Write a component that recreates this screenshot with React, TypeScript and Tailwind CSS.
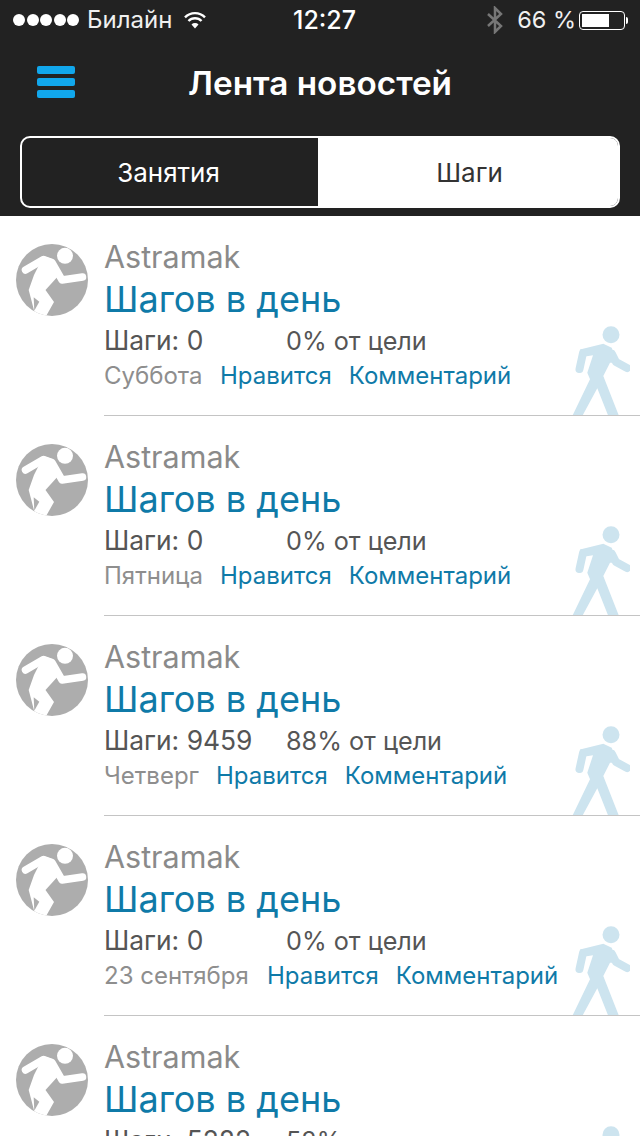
const font = { fontFamily: 'Inter, "Liberation Sans", sans-serif' };

function Avatar() {
  return (
    <svg width="72" height="72" viewBox="0 0 72 72" className="shrink-0">
      <defs>
        <clipPath id="avatar-clip">
          <circle cx="36" cy="36" r="36" />
        </clipPath>
      </defs>
      <circle cx="36" cy="36" r="36" fill="#adadad" />
      <g clipPath="url(#avatar-clip)">
        <circle cx="49" cy="11.8" r="8" fill="#fff" />
        <path d="M9.5 26 L27.5 15.5 L36 18.5 L46 36 L66.5 33" fill="none" stroke="#fff" strokeWidth="7.5" strokeLinecap="round" strokeLinejoin="round" />
        <path d="M18 31 L27.5 12 L36 15 L44 30 L29.5 46 L38 58 L29 74 L20 74 L12.7 46 Z" fill="#fff" />
        <path d="M17.7 53.3 L23.3 57.7 L18.3 66.7 Z" fill="#adadad" />
      </g>
    </svg>
  );
}

function Walker() {
  return (
    <svg width="60" height="90" viewBox="0 0 60 90" className="absolute left-[570px] bottom-0">
      <circle cx="41" cy="8.7" r="8.5" fill="#cde4ef" />
      <path d="M13 27 L9.5 43" fill="none" stroke="#cde4ef" strokeWidth="8" strokeLinecap="round" />
      <path d="M42 28 L46 36 L57 42" fill="none" stroke="#cde4ef" strokeWidth="8" strokeLinecap="round" strokeLinejoin="round" />
      <path d="M10 23.5 L33.3 17.7 L41.7 21.7 L47.3 36.7 L40 36.7 L33.3 50 L49 90 L38.3 90 L27.3 62.3 L12.3 90 L2.3 90 L20 53.3 L17.3 46.7 L23 29.3 L12 31 Z" fill="#cde4ef" />
    </svg>
  );
}

type Row = { day: string; steps: string; pct: string; dayW: string };

function FeedItem({ day, steps, pct, dayW }: Row) {
  return (
    <div className="relative h-[200px] shrink-0">
      <div className="flex pl-[16px] pt-[28px]">
        <Avatar />
        <div className="ml-[16px] flex flex-col">
          <div className="text-[30.5px] leading-[26px] text-[#8a8a8a]">Astramak</div>
          <div className="mt-[7px] text-[36px] leading-[44px] text-[#0f7aa8]">Шагов в день</div>
          <div className="flex items-baseline leading-[34px] text-[#555555] mt-[2px]">
            <span className="w-[182px] text-[26.4px]">{steps}</span>
            <span className="text-[25.2px]">{pct}</span>
          </div>
          <div className="flex text-[24px] leading-[34px] mt-[1px]">
            <span className={`${dayW} text-[#8e8e8e]`}>{day}</span>
            <span className="text-[#0f7aa8] mr-[17px]">Нравится</span>
            <span className="text-[#0f7aa8]">Комментарий</span>
          </div>
        </div>
      </div>
      <Walker />
      <div className="absolute left-[104px] right-0 bottom-0 h-px bg-[#c4c4c4]" />
    </div>
  );
}

const rows: Row[] = [
  { day: 'Суббота', steps: 'Шаги: 0', pct: '0% от цели', dayW: 'w-[116px]' },
  { day: 'Пятница', steps: 'Шаги: 0', pct: '0% от цели', dayW: 'w-[116px]' },
  { day: 'Четверг', steps: 'Шаги: 9459', pct: '88% от цели', dayW: 'w-[112px]' },
  { day: '23 сентября', steps: 'Шаги: 0', pct: '0% от цели', dayW: 'w-[163px]' },
  { day: '22 сентября', steps: 'Шаги: 5282', pct: '52% от цели', dayW: 'w-[163px]' },
];

export default function App() {
  return (
    <div style={font} className="w-[640px] h-[1136px] overflow-hidden bg-white flex flex-col">
      <div className="h-[216px] shrink-0 bg-[#222222] flex flex-col">
        <div className="h-[40px] flex items-center pl-[13px] pr-[12px] text-white">
          <div className="flex items-center w-[280px] text-[24px]">
            <div className="flex gap-[1.5px]">
              {[0, 1, 2, 3, 4].map((i) => (
                <span key={i} className="w-[12px] h-[12px] rounded-full bg-white" />
              ))}
            </div>
            <span className="ml-[8px] text-[#f0f0f0]">Билайн</span>
            <svg width="24" height="19" viewBox="0 0 24 18" className="ml-[11px]">
              <path d="M12 17 L8.5 13 A5 5 0 0 1 15.5 13 Z" fill="#fff" />
              <path d="M5.5 9.5 A9 9 0 0 1 18.5 9.5 M2 5.8 A14 14 0 0 1 22 5.8" fill="none" stroke="#fff" strokeWidth="2.4" />
            </svg>
          </div>
          <div className="text-[25px] font-medium relative top-[1px]">12:27</div>
          <div className="flex items-center flex-1 justify-end text-[23.5px]">
            <svg width="18" height="28" viewBox="0 0 18 28">
              <path d="M2 8 L15 20 L9 26 L9 2 L15 8 L2 20" fill="none" stroke="#777" strokeWidth="2.5" />
            </svg>
            <span className="ml-[13px] text-[#f0f0f0]">66 %</span>
            <div className="ml-[3px] w-[46px] h-[19px] border border-white rounded-[4px] p-[2px]">
              <div className="w-[27px] h-full bg-white" />
            </div>
            <div className="ml-[1px] w-[2px] h-[7px] bg-white rounded-r-full" />
          </div>
        </div>
        <div className="relative h-[96px] shrink-0 flex items-center justify-center">
          <div className="absolute left-[37px] top-[26px] flex flex-col gap-[4px]">
            <span className="block w-[38px] h-[8px] rounded-[2px] bg-[#11a7ec]" />
            <span className="block w-[38px] h-[8px] rounded-[2px] bg-[#11a7ec]" />
            <span className="block w-[38px] h-[8px] rounded-[2px] bg-[#11a7ec]" />
          </div>
          <span className="text-[33.3px] font-semibold text-white relative top-[-4px]">Лента новостей</span>
        </div>
        <div className="mx-[20px] h-[72px] flex rounded-[10px] overflow-hidden border-2 border-white text-[26px]">
          <div className="w-[296px] pr-[3px] flex items-center justify-center text-white">Занятия</div>
          <div className="flex-1 pl-[3px] flex items-center justify-center bg-white text-[#333333]">Шаги</div>
        </div>
      </div>
      {rows.map((r, i) => (
        <FeedItem key={i} {...r} />
      ))}
    </div>
  );
}
